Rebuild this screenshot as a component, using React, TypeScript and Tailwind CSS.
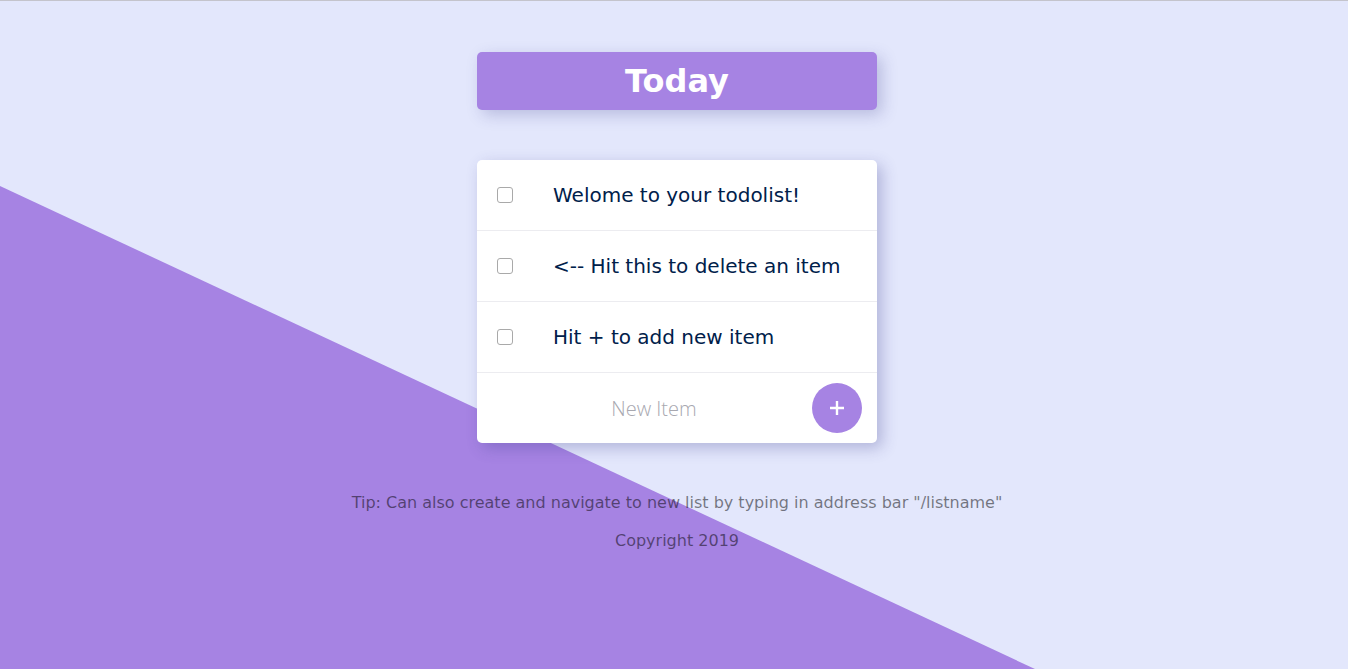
import React from "react";

const items = [
  "Welome to your todolist!",
  "<-- Hit this to delete an item",
  "Hit + to add new item",
];

export default function App() {
  return (
    <div
      className="relative min-h-[669px] overflow-hidden border-t border-[#c4c4cc] bg-[#e3e7fc]"
      style={{ fontFamily: '"DejaVu Sans", sans-serif' }}
    >
      <svg
        className="absolute inset-0 h-full w-full"
        viewBox="0 0 1348 668"
        preserveAspectRatio="none"
      >
        <polygon points="0,185 1035,668 0,668" fill="#a683e3" />
      </svg>
      <div className="relative flex flex-col items-center pl-[6px] pt-[51px]">
        <div className="flex h-[58px] w-[400px] items-center justify-center rounded-[5px] bg-[#a683e3] shadow-[5px_5px_15px_rgba(60,60,140,0.25)]">
          <h1 className="text-[32px] font-bold leading-none text-white">Today</h1>
        </div>
        <div className="mt-[50px] w-[400px] rounded-[5px] bg-white shadow-[5px_5px_15px_rgba(60,60,140,0.3)]">
          {items.map((t) => (
            <div
              key={t}
              className="flex h-[71px] items-center border-b border-[#ececf0]"
            >
              <div className="ml-[20px] h-[16px] w-[16px] rounded-[3px] border border-[#a9a9a9] bg-white" />
              <span className="ml-[40px] text-[20px] text-[#00204a]">{t}</span>
            </div>
          ))}
          <div className="flex h-[70px] items-center">
            <span
              className="flex-1 pl-[19px] pt-[2px] text-center text-[20px] font-light text-[#a8a8b0]"
              style={{ fontFamily: '"Open Sans", sans-serif' }}
            >
              New Item
            </span>
            <div className="mr-[15px] flex h-[50px] w-[50px] items-center justify-center rounded-full bg-[#a683e3] text-white">
              <svg width="16" height="16" viewBox="0 0 16 16">
                <path d="M8 1v14M1 8h14" stroke="white" strokeWidth="2.4" />
              </svg>
            </div>
          </div>
        </div>
        <p className="mt-[48px] text-[16px] text-black/50">
          Tip: Can also create and navigate to new list by typing in address bar "/listname"
        </p>
        <p className="mt-[14px] text-[16px] text-black/50">Copyright 2019</p>
      </div>
    </div>
  );
}
